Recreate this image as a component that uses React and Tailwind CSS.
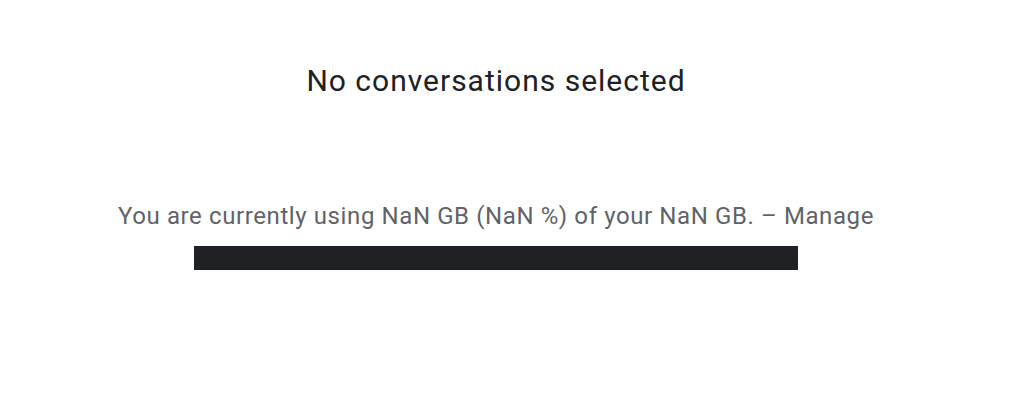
export default function App() {
  return (
    <div className="w-[992px] h-[414px] bg-white flex flex-col items-center" style={{ fontFamily: 'Roboto, "Liberation Sans", sans-serif' }}>
      <div className="mt-[63px] text-[30px] leading-[36px] tracking-[1px] text-[#202124] whitespace-nowrap">No conversations selected</div>
      <div className="mt-[101px] text-[24px] leading-[32px] tracking-[0.6px] text-[#5f6368] whitespace-nowrap">
        You are currently using NaN GB (NaN %) of your NaN GB. – Manage
      </div>
      <div className="mt-[14px] w-[604px] h-[24px] bg-[#202124]"></div>
    </div>
  );
}
